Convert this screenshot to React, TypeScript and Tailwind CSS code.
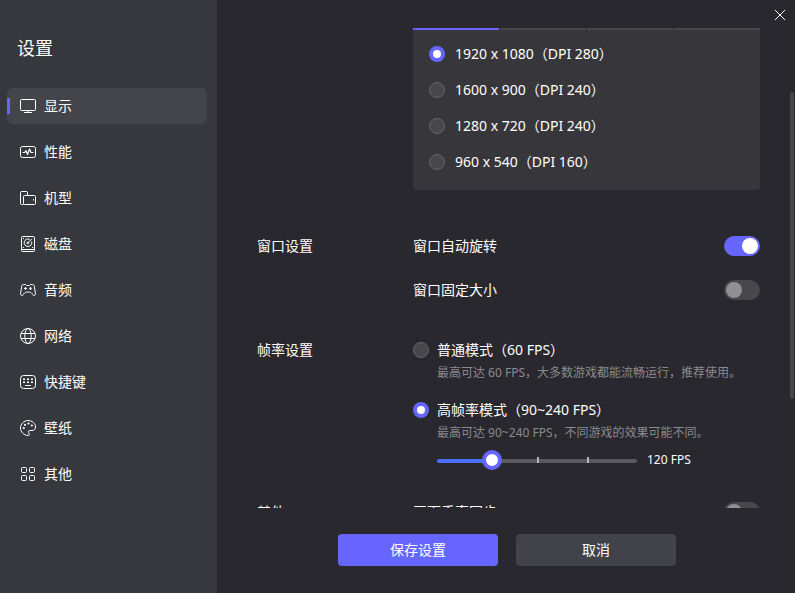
import { useState } from "react";
import type { ReactNode } from "react";
import { clsx } from "clsx";

const ICON_PROPS = {
  viewBox: "0 0 16 16",
  fill: "none",
  stroke: "currentColor",
  className: "size-4 shrink-0",
  "aria-hidden": true,
};

function DisplayIcon() {
  return (
    <svg {...ICON_PROPS}>
      <rect x="0.5" y="1.5" width="15" height="11" rx="1" />
      <path d="M8 12.5v2M4 14.5h8" />
    </svg>
  );
}

function PerformanceIcon() {
  return (
    <svg {...ICON_PROPS}>
      <rect x="0.5" y="2.5" width="15" height="11" rx="2" />
      <path d="M2.5 8.5h2.200l1.300-1.800 1.500 3.800 2-5.500 1.500 3.500h2.500" strokeWidth="1.2" strokeLinejoin="round" />
    </svg>
  );
}

function DeviceIcon() {
  return (
    <svg {...ICON_PROPS}>
      <path d="M3.5 14.5h-2a1 1 0 0 1-1-1v-11a1 1 0 0 1 1-1h5a1 1 0 0 1 1 1v3" />
      <rect x="3.5" y="5.5" width="12" height="9" rx="1" />
      <path d="M13.5 9v1.500" />
    </svg>
  );
}

function DiskIcon() {
  return (
    <svg {...ICON_PROPS}>
      <rect x="1.5" y="0.5" width="13" height="15" rx="1" />
      <path d="M1.5 13.5h13" />
      <path d="M9.800 3.400a3.800 3.800 0 1 0 1.800 2.200" />
      <path d="M12 2.800 8.300 6.500" />
      <circle cx="7.800" cy="7" r="0.9" />
      <path d="M3 2.500h1M3 11.500h1M12 11.500h1" />
    </svg>
  );
}

function GamepadIcon() {
  return (
    <svg {...ICON_PROPS}>
      <path
        d="M3.500 2.500h2l1 1h3l1-1h2c1 0 1.600.7 1.800 1.700l1.100 7c.2 1.400-.3 2.300-1.300 2.300-1.100 0-1.500-1-2.200-2-.8-1.100-2-1.500-3.900-1.500s-3.100.4-3.900 1.500c-.7 1-1.100 2-2.200 2-1 0-1.500-.9-1.300-2.300l1.100-7c.2-1 .8-1.700 1.800-1.700Z"
        strokeLinejoin="round"
      />
      <path d="M4 6.500h3M5.500 5v3" />
      <circle cx="10.500" cy="6.500" r="1.200" fill="currentColor" stroke="none" />
    </svg>
  );
}

function NetworkIcon() {
  return (
    <svg {...ICON_PROPS}>
      <circle cx="8" cy="8" r="7.5" />
      <ellipse cx="8" cy="8" rx="3.2" ry="7.5" />
      <path d="M1 5.500h14M1 10.500h14" />
    </svg>
  );
}

function KeyboardIcon() {
  return (
    <svg {...ICON_PROPS}>
      <rect x="0.5" y="1.5" width="15" height="13" rx="3" />
      <path d="M3 5.200h2M7 5.200h2M11 5.200h2M3 8.300h2M7 8.300h2M11 8.300h2" strokeWidth="1.6" />
      <path d="M5 11.500h6" />
    </svg>
  );
}

function WallpaperIcon() {
  return (
    <svg {...ICON_PROPS}>
      <path d="M8.500 15.500C4 15.500.5 12 .5 8S4 .5 8 .5s7.500 2.800 7.500 6.500c0 2.500-1.500 3.500-3.500 3.500h-2c-1.800 0-2 1.300-1.300 2.300.7 1 .8 2.700-.2 2.700Z" />
      <g fill="currentColor" stroke="none">
        <circle cx="3.800" cy="8" r="1.100" />
        <circle cx="5" cy="4.800" r="1.100" />
        <circle cx="8.500" cy="3.500" r="1.100" />
        <circle cx="11.800" cy="5.500" r="1.100" />
      </g>
    </svg>
  );
}

function OtherIcon() {
  return (
    <svg {...ICON_PROPS}>
      <rect x="1.5" y="1.5" width="5" height="5" rx="1" />
      <rect x="9.5" y="1.5" width="5" height="5" rx="1" />
      <rect x="1.5" y="9.5" width="5" height="5" rx="1" />
      <rect x="9.5" y="9.5" width="5" height="5" rx="1" />
    </svg>
  );
}

const NAV_ITEMS = [
  { id: "display",     label: "显示",   icon: DisplayIcon },
  { id: "performance", label: "性能",   icon: PerformanceIcon },
  { id: "device",      label: "机型",   icon: DeviceIcon },
  { id: "disk",        label: "磁盘",   icon: DiskIcon },
  { id: "audio",       label: "音频",   icon: GamepadIcon },
  { id: "network",     label: "网络",   icon: NetworkIcon },
  { id: "shortcuts",   label: "快捷键", icon: KeyboardIcon },
  { id: "wallpaper",   label: "壁纸",   icon: WallpaperIcon },
  { id: "other",       label: "其他",   icon: OtherIcon },
];

const RESOLUTIONS = [
  "1920 x 1080（DPI 280）",
  "1600 x 900（DPI 240）",
  "1280 x 720（DPI 240）",
  "960 x 540（DPI 160）",
];

const FPS_STEPS = [90, 120, 160, 200, 240];

interface RadioProps {
  name: string;
  checked: boolean;
  onChange: () => void;
}

function Radio({ name, checked, onChange }: RadioProps) {
  return (
    <input
      type="radio"
      name={name}
      checked={checked}
      onChange={onChange}
      className="size-4 shrink-0 appearance-none rounded-full border border-[#66666b] bg-[#47474c] checked:border-4 checked:border-[#6666ff] checked:bg-white"
    />
  );
}

function Toggle({ label, defaultChecked = false }: { label: string; defaultChecked?: boolean }) {
  return (
    <label className="flex h-11 items-center justify-between">
      {label}
      <input
        type="checkbox"
        role="switch"
        defaultChecked={defaultChecked}
        className="flex h-5 w-9 shrink-0 appearance-none rounded-full bg-[#47474c] p-0.5 before:size-4 before:rounded-full before:bg-[#919095] checked:justify-end checked:bg-[#6666ff] checked:before:bg-white"
      />
    </label>
  );
}

function Section({ title, children }: { title?: string; children: ReactNode }) {
  return (
    <section className="flex">
      <h2 className="h-11 w-[156px] shrink-0 leading-11">{title}</h2>
      <div className="min-w-0 flex-1">{children}</div>
    </section>
  );
}

export default function App() {
  const [page, setPage] = useState("display");
  const [resolution, setResolution] = useState(RESOLUTIONS[0]);
  const [mode, setMode] = useState("high");
  const [step, setStep] = useState(1);

  return (
    <div className="flex h-screen overflow-hidden bg-[#29282e] font-['Noto_Sans','Noto_Sans_CJK_SC',sans-serif] text-sm text-white">
      {/* Sidebar */}
      <aside className="w-[217px] shrink-0 bg-[#37383d] pt-8 pr-2.5 pl-[7px]">
        <h1 className="h-8 px-2.5 text-lg leading-8">设置</h1>
        <nav className="mt-6">
          <ul className="flex flex-col gap-2.5">
            {NAV_ITEMS.map(item => (
              <li key={item.id}>
                <button
                  type="button"
                  onClick={() => setPage(item.id)}
                  className={clsx(
                    "relative flex h-9 w-full items-center gap-2 rounded-md px-[13px]",
                    page === item.id && "bg-[#44444b]"
                  )}
                >
                  {page === item.id && <span className="absolute left-0 h-4 w-[3px] bg-[#6666ff]" />}
                  <item.icon />
                  {item.label}
                </button>
              </li>
            ))}
          </ul>
        </nav>
      </aside>

      <div className="relative flex min-w-0 flex-1 flex-col">
        {/* Title bar */}
        <header className="flex h-7 shrink-0 items-center justify-end px-[7px] pt-0.5">
          <button type="button" aria-label="关闭" className="p-0.5">
            <svg viewBox="0 0 12 12" fill="none" stroke="currentColor" className="size-3">
              <path d="M1 1l10 10M11 1L1 11" />
            </svg>
          </button>
        </header>

        {/* Settings */}
        <main className="min-h-0 flex-1 overflow-hidden pr-[35px] pl-10">
          <Section>
            <div className="grid grid-cols-4 gap-px">
              <span className="h-0.5 bg-[#6666ff]" />
              <span className="h-0.5 bg-[#47474c]" />
              <span className="h-0.5 bg-[#47474c]" />
              <span className="h-0.5 bg-[#47474c]" />
            </div>
            <div className="rounded-b bg-[#37363b] px-4 pt-1.5 pb-2.5">
              {RESOLUTIONS.map(item => (
                <label key={item} className="flex h-9 items-center gap-2.5">
                  <Radio name="resolution" checked={resolution === item} onChange={() => setResolution(item)} />
                  {item}
                </label>
              ))}
            </div>
          </Section>

          <div className="mt-[34px]">
            <Section title="窗口设置">
              <Toggle label="窗口自动旋转" defaultChecked />
              <Toggle label="窗口固定大小" />
            </Section>
          </div>

          <div className="mt-4">
            <Section title="帧率设置">
              <div className="pt-2.5">
                <label className="flex h-6 items-center gap-2">
                  <Radio name="mode" checked={mode === "normal"} onChange={() => setMode("normal")} />
                  普通模式（60 FPS）
                </label>
                <p className="pl-6 text-xs leading-[22px] text-[#8b8b8f]">最高可达 60 FPS，大多数游戏都能流畅运行，推荐使用。</p>
              </div>
              <div className="mt-3.5">
                <label className="flex h-6 items-center gap-2">
                  <Radio name="mode" checked={mode === "high"} onChange={() => setMode("high")} />
                  高帧率模式（90~240 FPS）
                </label>
                <p className="pl-6 text-xs leading-[22px] text-[#8b8b8f]">最高可达 90~240 FPS，不同游戏的效果可能不同。</p>
                <div className="mt-1.5 flex h-5 items-center gap-2.5 pl-6 text-xs">
                  <div className="relative flex h-5 w-[200px] items-center">
                    <span className="absolute inset-x-0 top-[9px] h-1 rounded-full bg-[#5a595e]" />
                    <span
                      className="absolute top-[9px] left-0 h-1 rounded-full bg-[#4c6fff]"
                      style={{ width: `${step * 25}%` }}
                    />
                    {[1, 2, 3].map(i => (
                      <span key={i} className="absolute top-[7px] h-1.5 w-0.5 bg-[#b5b5b8]" style={{ left: `${i * 25}%` }} />
                    ))}
                    <input
                      type="range"
                      aria-label="FPS"
                      min={0}
                      max={4}
                      value={step}
                      onChange={e => setStep(Number(e.target.value))}
                      className="relative h-5 w-full appearance-none bg-transparent [&::-webkit-slider-thumb]:size-5 [&::-webkit-slider-thumb]:appearance-none [&::-webkit-slider-thumb]:rounded-full [&::-webkit-slider-thumb]:border-4 [&::-webkit-slider-thumb]:border-[#6666ff] [&::-webkit-slider-thumb]:bg-white"
                    />
                  </div>
                  <span>{FPS_STEPS[step]} FPS</span>
                </div>
              </div>
            </Section>
          </div>

          <div className="mt-5">
            <Section title="其他">
              <Toggle label="画面垂直同步" />
            </Section>
          </div>
        </main>

        {/* Scrollbar thumb */}
        <span className="absolute top-[92px] right-px h-[307px] w-1 rounded-full bg-[#45454a]" />

        {/* Actions */}
        <footer className="flex h-[85px] shrink-0 justify-center gap-[18px] pt-[26px] pl-0.5">
          <button type="button" className="h-8 w-40 rounded-sm bg-[#6666ff]">保存设置</button>
          <button type="button" className="h-8 w-40 rounded-sm bg-[#42424a]">取消</button>
        </footer>
      </div>
    </div>
  );
}
